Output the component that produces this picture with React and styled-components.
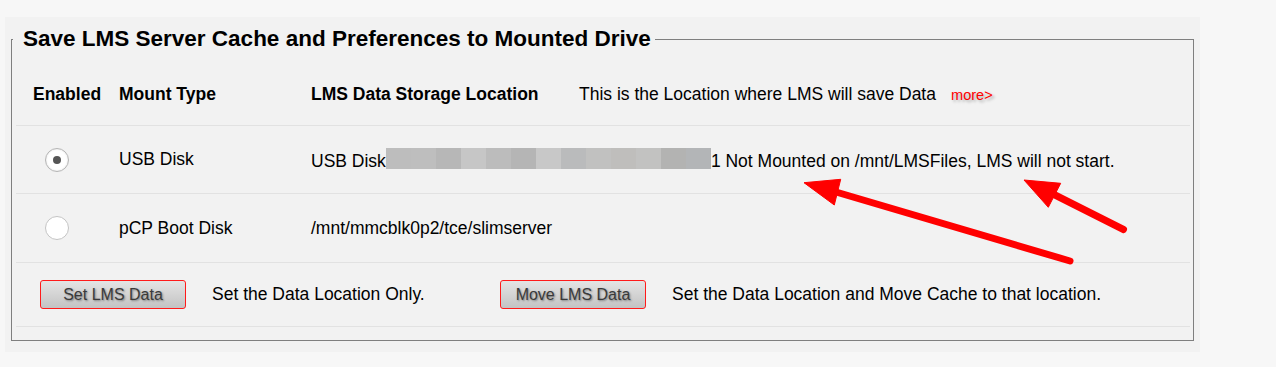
import React from "react";
import styled, { createGlobalStyle } from "styled-components";

const GlobalStyle = createGlobalStyle`
  html, body { margin: 0; padding: 0; }
  body {
    background: #f7f7f7;
    font-family: "Liberation Sans", Arial, Helvetica, sans-serif;
    color: #000;
  }
`;

const Page = styled.div`
  position: relative;
  box-sizing: border-box;
  width: 1276px;
  height: 367px;
  padding: 17px 0 0 5px;
  overflow: hidden;
`;

const Panel = styled.div`
  box-sizing: border-box;
  width: 1195px;
  background: #f2f2f2;
  padding: 9px 6px 11px 6px;
`;

const Fieldset = styled.fieldset`
  margin: 0;
  min-width: 0;
  border: 1px solid #7f7f7f;
  padding: 8px 3px 13px 4px;
`;

const Legend = styled.legend`
  font-size: 22.5px;
  font-weight: bold;
  line-height: 26px;
  padding: 0 4px 0 10px;
  margin-left: -3px;
`;

const Row = styled.div`
  display: grid;
  grid-template-columns: ${(p) => p.$cols || "103px 192px 268px 1fr"};
  align-items: center;
  height: ${(p) => p.$h}px;
  padding-top: ${(p) => p.$pt || 0}px;
  border-bottom: 1px solid #e2e2e2;
  font-size: 17.5px;
  font-weight: ${(p) => (p.$head ? "bold" : "normal")};
  white-space: nowrap;
`;

const Cell = styled.div`
  padding-left: ${(p) => p.$pl || 0}px;
  grid-column: ${(p) => p.$span || "auto"};
`;

const Plain = styled.span`
  font-weight: normal;
`;

const More = styled.span`
  margin-left: 15px;
  font-size: 14.6px;
  font-weight: normal;
  color: #ff0000;
  text-shadow: 2px 2px 3px rgba(0, 0, 0, 0.3);
`;

const Radio = styled.span`
  display: flex;
  align-items: center;
  justify-content: center;
  box-sizing: border-box;
  width: 24px;
  height: 24px;
  margin-left: 29px;
  border-radius: 50%;
  background: #fff;
  border: 1px solid ${(p) => (p.$checked ? "#b4b4b4" : "#c4c4c4")};
  box-shadow: ${(p) => (p.$checked ? "inset 0 0 2px rgba(0,0,0,0.15)" : "none")};

  &::after {
    content: "";
    display: ${(p) => (p.$checked ? "block" : "none")};
    width: 8px;
    height: 8px;
    border-radius: 50%;
    background: #555;
  }
`;

const Blur = styled.span`
  display: inline-flex;
  vertical-align: -2px;
  height: 21px;
`;

const Block = styled.span`
  width: 25px;
  height: 21px;
  background: ${(p) => p.$c};
`;

const Button = styled.button`
  box-sizing: border-box;
  width: 146px;
  height: 29px;
  margin-left: ${(p) => p.$ml || 0}px;
  padding: 0;
  border: 1px solid #ff1a1a;
  border-radius: 3px;
  background: linear-gradient(#e4e4e4, #c3c3c3);
  color: #3a3a3a;
  font-family: "Liberation Sans", Arial, sans-serif;
  font-size: 16px;
  text-shadow: 1px 1px 2px rgba(0, 0, 0, 0.4);
  cursor: pointer;
`;

const Arrows = styled.svg`
  position: absolute;
  left: 0;
  top: 0;
  pointer-events: none;
`;

const blocks = [
  "#bdbdbd", "#bebebe", "#b7b7b7", "#c6c6c6", "#bcbcbc", "#b5b5b5",
  "#c8c8c8", "#babbbc", "#c1c1c0", "#bfbebc", "#c2c2c1", "#b3b3b2", "#b3b5b7",
];

export default function App() {
  return (
    <>
      <GlobalStyle />
      <Page>
        <Panel>
          <Fieldset>
            <Legend>Save LMS Server Cache and Preferences to Mounted Drive</Legend>
            <Row $h={62} $pt={3} $head>
              <Cell $pl={17}>Enabled</Cell>
              <Cell>Mount Type</Cell>
              <Cell>LMS Data Storage Location</Cell>
              <Cell>
                <Plain>This is the Location where LMS will save Data</Plain>
                <More>more&gt;</More>
              </Cell>
            </Row>
            <Row $h={67}>
              <Radio $checked />
              <Cell>USB Disk</Cell>
              <Cell $span="3 / span 2">
                USB Disk
                <Blur>
                  {blocks.map((c, i) => (
                    <Block key={i} $c={c} />
                  ))}
                </Blur>
                1 Not Mounted on /mnt/LMSFiles, LMS will not start.
              </Cell>
            </Row>
            <Row $h={68}>
              <Radio />
              <Cell>pCP Boot Disk</Cell>
              <Cell $span="3 / span 2">/mnt/mmcblk0p2/tce/slimserver</Cell>
            </Row>
            <Row $h={63} $cols="196px 288px 172px 1fr">
              <Cell>
                <Button $ml={24}>Set LMS Data</Button>
              </Cell>
              <Cell>Set the Data Location Only.</Cell>
              <Cell>
                <Button>Move LMS Data</Button>
              </Cell>
              <Cell>Set the Data Location and Move Cache to that location.</Cell>
            </Row>
          </Fieldset>
        </Panel>
        <Arrows width="1276" height="367" viewBox="0 0 1276 367">
          <g fill="#ff0000" stroke="#ff0000">
            <line x1="836" y1="192" x2="1070" y2="261" strokeWidth="7" strokeLinecap="round" />
            <polygon points="804,182.7 840.7,179.3 834.3,205" strokeWidth="1" strokeLinejoin="round" />
            <line x1="1053" y1="194" x2="1123.5" y2="229.5" strokeWidth="7" strokeLinecap="round" />
            <polygon points="1024,180 1060.7,183.3 1048.3,207.3" strokeWidth="1" strokeLinejoin="round" />
          </g>
        </Arrows>
      </Page>
    </>
  );
}
